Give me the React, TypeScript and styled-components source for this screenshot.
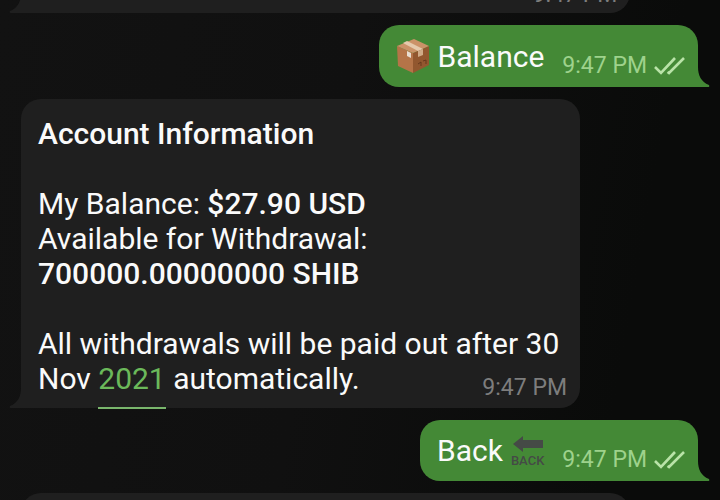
import React from "react";
import styled, { createGlobalStyle, css } from "styled-components";

const GlobalStyle = createGlobalStyle`
  *, *::before, *::after { box-sizing: border-box; }
  body {
    margin: 0;
    background: #101010;
    font-family: Roboto, "Noto Sans", sans-serif;
  }
`;

const incoming = "#1f1f1f";
const outgoing = "#448936";

const Chat = styled.main`
  height: 100vh;
  overflow: hidden;
  background: linear-gradient(100deg, #121212 0%, #101010 45%, #0a0b0a 85%);
`;

const Feed = styled.div`
  display: flex;
  flex-direction: column;
  gap: 12px;
  margin-top: -48px;
  padding: 0 22px 0 21px;
`;

const Bubble = styled.article<{ $own?: boolean }>`
  position: relative;
  color: #fafafa;
  font-size: 30px;
  line-height: 35px;
  ${(p) =>
    p.$own
      ? css`
          align-self: flex-end;
          display: flex;
          align-items: flex-end;
          padding: 13px 13px 13px 17px;
          background: ${outgoing};
          border-radius: 20px 20px 0 20px;
        `
      : css`
          align-self: flex-start;
          max-width: 559px;
          padding: 17px 13px 12px 17px;
          background: ${incoming};
          border-radius: 20px 20px 20px 0;
        `}
`;

const ClippedBubble = styled(Bubble)`
  display: flex;
  align-items: flex-end;
  justify-content: flex-end;
  width: 90%;
  max-width: none;
  min-height: 61px;
  padding-bottom: 10px;
`;

const TailShape = styled.svg<{ $own?: boolean }>`
  position: absolute;
  bottom: 0;
  width: 12px;
  height: 20px;
  ${(p) => (p.$own ? "left: 100%;" : "right: 100%; transform: scaleX(-1);")}
`;

const Paragraph = styled.p`
  margin: 0;
  & + & {
    margin-top: 35px;
  }
`;

const Strong = styled.strong`
  font-weight: 500;
`;

const DateLink = styled.a`
  color: #6bb95a;
  text-decoration: none;
  padding-bottom: 11px;
  border-bottom: 2px solid #79b66c;
`;

const Label = styled.span`
  display: flex;
  align-items: center;
  gap: 8px;
  margin-right: 18px;
`;

const Meta = styled.span<{ $own?: boolean; $inText?: boolean }>`
  display: flex;
  align-items: center;
  gap: 7px;
  color: ${(p) => (p.$own ? "#9ed28c" : "#7d7d7d")};
  font-size: 23px;
  line-height: 27px;
  ${(p) =>
    p.$inText
      ? css`
          float: right;
          margin: 13px 0 -5px;
        `
      : css`
          flex: none;
          margin-bottom: -5px;
        `}
`;

const BackMark = styled.span`
  display: flex;
  flex-direction: column;
  align-items: center;
  gap: 2px;
  padding-top: 2px;
  color: #454a46;
  font-size: 13px;
  font-weight: 500;
  line-height: 14px;
`;

function Tail({ own }: { own?: boolean }) {
  return (
    <TailShape $own={own} viewBox="0 0 12 20" aria-hidden="true">
      <path
        d="M0 0C0 8 3 15 11 18Q12 20 10 20H0Z"
        fill={own ? outgoing : incoming}
      />
    </TailShape>
  );
}

function Checks() {
  return (
    <svg width="31" height="20" viewBox="0 0 31 20" fill="none" aria-label="Read" role="img">
      <path
        d="M1 11L7 17L21 2M13.5 16L15 17L30 2"
        stroke="#b9e3a8"
        strokeWidth="2.6"
      />
    </svg>
  );
}

function PackageIcon() {
  return (
    <svg width="34" height="36" viewBox="0 0 34 36" aria-hidden="true">
      <path d="M1 8L17 15V35L2 28Z" fill="#b57448" />
      <path d="M17 15L33 8V27L17 35Z" fill="#92572f" />
      <path d="M1 8L18 1L33 8L17 15Z" fill="#cb9268" />
      <path d="M7 5L11 3L27 11L22 13Z" fill="#e5c9ac" />
      <path d="M22 13L27 11V17L22 19Z" fill="#d0ab88" />
      <path d="M11 13L15 15V20L11 18Z" fill="#e9ddd1" />
      <path d="M22 26L25 24V28M27 23L30 22V26" fill="none" stroke="#67391d" />
    </svg>
  );
}

function BackArrow() {
  return (
    <svg width="30" height="16" viewBox="0 0 30 16" aria-hidden="true">
      <path d="M0 8L10 0V4H30V12H10V16Z" fill="currentColor" />
    </svg>
  );
}

function Time({ own, inText }: { own?: boolean; inText?: boolean }) {
  return (
    <Meta $own={own} $inText={inText}>
      <time dateTime="21:47">9:47 PM</time>
      {own && <Checks />}
    </Meta>
  );
}

export default function App() {
  return (
    <>
      <GlobalStyle />
      <Chat>
        <Feed>
          <ClippedBubble>
            <Time />
            <Tail />
          </ClippedBubble>

          <Bubble $own>
            <Label>
              <PackageIcon />
              Balance
            </Label>
            <Time own />
            <Tail own />
          </Bubble>

          <Bubble>
            <Paragraph>
              <Strong>Account Information</Strong>
            </Paragraph>
            <Paragraph>
              My Balance: <Strong>$27.90 USD</Strong>
              <br />
              Available for Withdrawal:
              <br />
              <Strong>700000.00000000 SHIB</Strong>
            </Paragraph>
            <Paragraph>
              All withdrawals will be paid out after 30 Nov{" "}
              <DateLink href="#2021">2021</DateLink> automatically.
              <Time inText />
            </Paragraph>
            <Tail />
          </Bubble>

          <Bubble $own>
            <Label>
              Back
              <BackMark>
                <BackArrow />
                BACK
              </BackMark>
            </Label>
            <Time own />
            <Tail own />
          </Bubble>

          <ClippedBubble />
        </Feed>
      </Chat>
    </>
  );
}
